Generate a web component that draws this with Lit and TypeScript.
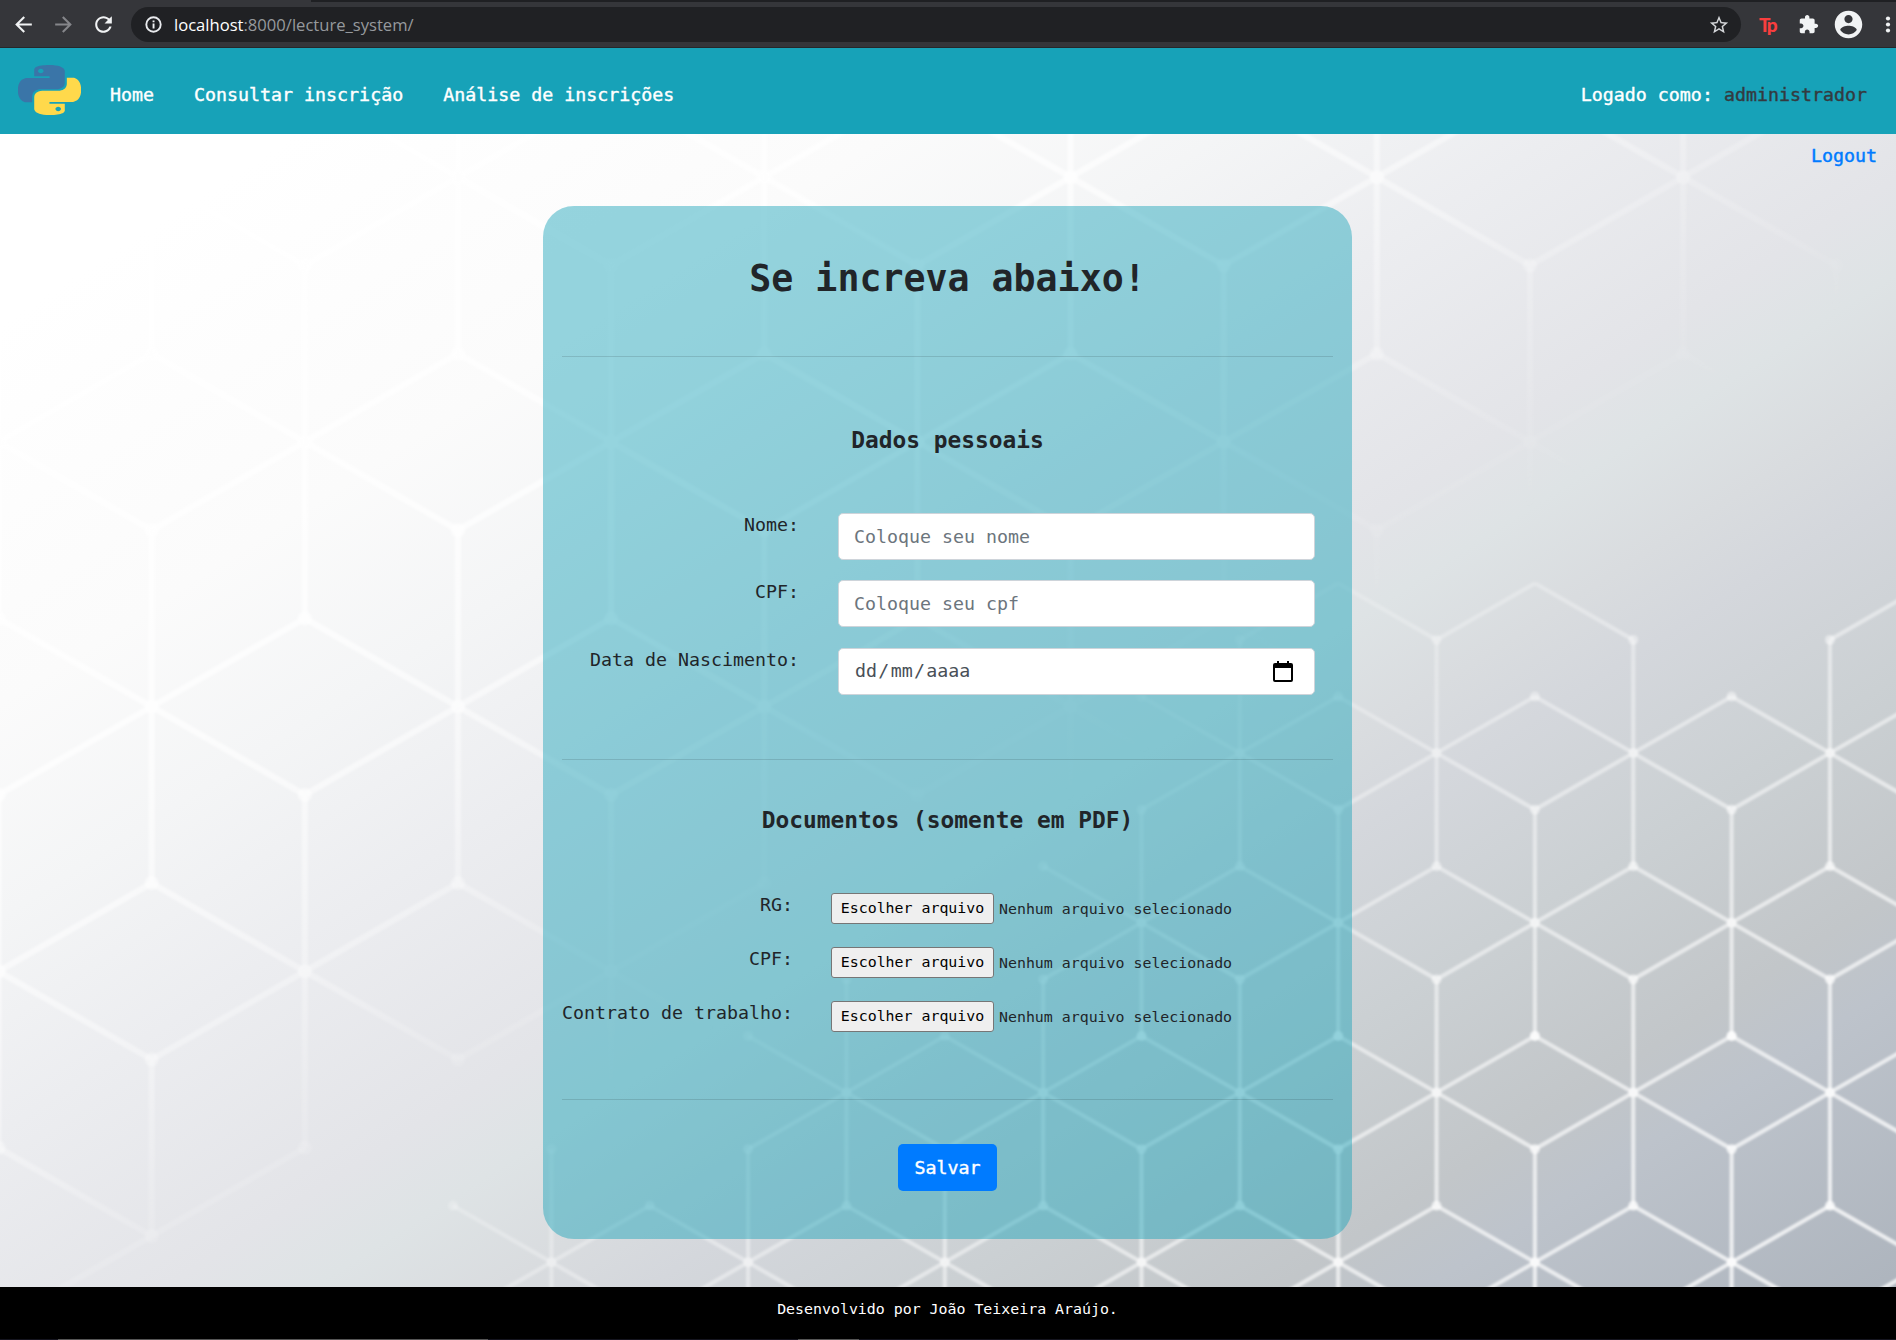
import { LitElement, html, css, svg } from "lit";
import { customElement, property } from "lit/decorators.js";

const PYTHON_HALF =
  "M14.25.18l.9.2.73.26.59.3.45.32.34.34.25.34.16.33.1.3.04.26.02.2-.01.13V8.5l-.05.63-.13.55-.21.46-.26.38-.3.31-.33.25-.35.19-.35.14-.33.1-.3.07-.26.04-.21.02H8.77l-.69.05-.59.14-.5.22-.41.27-.33.32-.27.35-.2.36-.15.37-.1.35-.07.32-.04.27-.02.21v3.06H3.17l-.21-.03-.28-.07-.32-.12-.35-.18-.36-.26-.36-.36-.35-.46-.32-.59-.28-.73-.21-.88-.14-1.05-.05-1.23.06-1.22.16-1.04.24-.87.32-.71.36-.57.4-.44.42-.33.42-.24.4-.16.36-.1.32-.05.24-.01h.16l.06.01h8.16v-.83H6.18l-.01-2.75-.02-.37.05-.34.11-.31.17-.28.25-.26.31-.23.38-.2.44-.18.51-.15.58-.12.64-.1.71-.06.77-.04.84-.02 1.27.05zm-6.3 1.98l-.23.33-.08.41.08.41.23.34.33.22.41.09.41-.09.33-.22.23-.34.08-.41-.08-.41-.23-.33-.33-.22-.41-.09-.41.09z";

/* ---------- isometric cube wallpaper ---------- */

type Spoke = "u" | "d" | "ul" | "ur" | "dl" | "dr";
interface Hub { x: number; y: number; spokes?: Spoke[] }
const ALL: Spoke[] = ["u", "d", "ul", "ur", "dl", "dr"];

function lattice(hubs: Hub[], hx: number, hy: number, nodeR: number) {
  const off: Record<Spoke, [number, number]> = {
    u: [0, -2 * hy], d: [0, 2 * hy],
    ul: [-hx, -hy], ur: [hx, -hy], dl: [-hx, hy], dr: [hx, hy],
  };
  let lines = "";
  const nodes = new Map<string, [number, number]>();
  const add = (x: number, y: number) =>
    nodes.set(Math.round(x / 8) + ":" + Math.round(y / 8), [x, y]);
  for (const h of hubs) {
    const list = h.spokes ?? ALL;
    if (list.length > 3) add(h.x, h.y);
    for (const s of list) {
      const [dx, dy] = off[s];
      lines += `M${h.x} ${h.y}l${dx} ${dy}`;
      add(h.x + dx, h.y + dy);
    }
  }
  return svg`<path d=${lines}></path>${[...nodes.values()].map(
    ([x, y]) => svg`<circle cx=${x} cy=${y} r=${nodeR} stroke="none"></circle>`
  )}`;
}

const SX = 98.35, SY = 56.6;
const small = (col: number, row: number, spokes?: Spoke[]): Hub => ({
  x: 551.4 + col * SX, y: 1262.3 - row * 169.75, spokes,
});
const smallHubs: Hub[] = [
  ...[0, 2, 4, 6, 8, 10, 12, 14].map((c) => small(c, 0)),
  ...[3, 5, 7, 9, 11, 13].map((c) => small(c, 1)),
  ...[6, 8, 10, 12, 14].map((c) => small(c, 2)),
  ...[7, 9, 11, 13].map((c) => small(c, 3)),
  small(8, 4, ["dl", "dr"]),
  small(10, 4, ["dl", "dr"]),
  small(14, 4, ["dl"]),
];

const BX = 153.15, BY = 88.2;
const big = (col: number, row: number, spokes?: Spoke[]): Hub => ({
  x: -1.5 + col * BX, y: 177.2 + row * 264.7, spokes,
});
const bigHubs: Hub[] = [
  ...[1, 3, 5, 7, 9, 11].map((c) => big(c, 0)),
  ...[0, 2, 4, 6, 8, 10, 12].map((c) => big(c, 1)),
  ...[1, 3, 5, 7, 9].map((c) => big(c, 2)),
  ...[0, 2, 4].map((c) => big(c, 3)),
  big(1, 4, ["u", "ul", "ur", "dl"]),
];

@customElement("cube-wallpaper")
class CubeWallpaper extends LitElement {
  static styles = css`
    :host { display: block; }
    .art { display: block; width: 100%; height: 100%; }
  `;
  render() {
    const g = { x1: 0, y1: 134, x2: 1078, y2: 1818 };
    return html`<svg class="art" viewBox="0 134 1896 1153" preserveAspectRatio="none">
      ${svg`<defs>
        <linearGradient id="sky" gradientUnits="userSpaceOnUse" x1=${g.x1} y1=${g.y1} x2=${g.x2} y2=${g.y2}>
          <stop offset="0.08" stop-color="#ffffff"></stop>
          <stop offset="0.24" stop-color="#fbfbfb"></stop>
          <stop offset="0.33" stop-color="#f4f5f6"></stop>
          <stop offset="0.42" stop-color="#ecedf0"></stop>
          <stop offset="0.53" stop-color="#e3e4e8"></stop>
          <stop offset="0.57" stop-color="#dee3e5"></stop>
          <stop offset="0.62" stop-color="#d9dcdf"></stop>
          <stop offset="0.66" stop-color="#d4d7dc"></stop>
          <stop offset="0.74" stop-color="#cbd0d3"></stop>
          <stop offset="0.83" stop-color="#c2c6c9"></stop>
          <stop offset="0.87" stop-color="#bdc3cb"></stop>
          <stop offset="1" stop-color="#adb4bd"></stop>
        </linearGradient>
        <linearGradient id="far" gradientUnits="userSpaceOnUse" x1=${g.x1} y1=${g.y1} x2=${g.x2} y2=${g.y2}>
          <stop offset="0.3" stop-color="#fff" stop-opacity="0.68"></stop>
          <stop offset="0.4" stop-color="#fff" stop-opacity="0.42"></stop>
          <stop offset="0.48" stop-color="#fff" stop-opacity="0.18"></stop>
          <stop offset="0.57" stop-color="#fff" stop-opacity="0"></stop>
        </linearGradient>
        <linearGradient id="near" gradientUnits="userSpaceOnUse" x1=${g.x1} y1=${g.y1} x2=${g.x2} y2=${g.y2}>
          <stop offset="0.54" stop-color="#fff" stop-opacity="0.15"></stop>
          <stop offset="0.66" stop-color="#fff" stop-opacity="0.38"></stop>
          <stop offset="0.82" stop-color="#fff" stop-opacity="0.62"></stop>
          <stop offset="0.96" stop-color="#fff" stop-opacity="0.76"></stop>
        </linearGradient>
        <filter id="soft" filterUnits="userSpaceOnUse" x="0" y="134" width="1896" height="1153"><feGaussianBlur stdDeviation="0.9"></feGaussianBlur></filter>
        <filter id="softer" filterUnits="userSpaceOnUse" x="0" y="134" width="1896" height="1153"><feGaussianBlur stdDeviation="1.3"></feGaussianBlur></filter>
      </defs>
      <rect x="0" y="134" width="1896" height="1153" fill="url(#sky)"></rect>
      <g filter="url(#softer)" stroke="url(#far)" fill="url(#far)" stroke-width="6">${lattice(bigHubs, BX, BY, 7)}</g>
      <g filter="url(#soft)" stroke="url(#near)" fill="url(#near)" stroke-width="4.2">${lattice(smallHubs, SX, SY, 5)}</g>`}
    </svg>`;
  }
}

/* ---------- browser toolbar ---------- */

@customElement("browser-bar")
class BrowserBar extends LitElement {
  static styles = css`
    :host { display: block; font-family: "Open Sans", "Noto Sans", sans-serif; }
    .strip { height: 2px; background: linear-gradient(90deg, #35363a 311px, #1f2023 311px); }
    .bar { box-sizing: border-box; height: 46px; background: #35363a; border-bottom: 1px solid #26272a;
      display: flex; align-items: center; padding-left: 11px; overflow: hidden; }
    .ic { display: block; flex: none; fill: #f1f3f4; }
    .dim { fill: #85868a; }
    .nav { display: flex; gap: 15px; width: 120px; flex: none; }
    .omni { height: 35px; width: 1610px; box-sizing: border-box; flex: none; border-radius: 18px; background: #202124;
      display: flex; align-items: center; padding: 0 11px 0 13px; }
    .url { flex: 1; margin-left: 11px; font-size: 16.6px; line-height: 22px; color: #96999d; }
    .host { color: #fff; }
    .tp { width: 20px; margin-left: 18px; color: #f93e3e; font: 900 19px/24px Lato, sans-serif; letter-spacing: -2px; flex: none; }
    .ext { margin-left: 19px; }
    .user { margin-left: 13px; }
    .more { margin-left: 14px; }
  `;
  render() {
    return html`<div class="strip"></div>
      <div class="bar">
        <div class="nav">
          <svg class="ic" width="25" height="25" viewBox="0 0 24 24"><path d="M20 11H7.83l5.59-5.59L12 4l-8 8 8 8 1.41-1.41L7.83 13H20v-2z"/></svg>
          <svg class="ic dim" width="25" height="25" viewBox="0 0 24 24"><path d="M12 4l-1.41 1.41L16.17 11H4v2h12.17l-5.58 5.59L12 20l8-8z"/></svg>
          <svg class="ic" width="25" height="25" viewBox="0 0 24 24"><path d="M17.65 6.35C16.2 4.9 14.21 4 12 4c-4.42 0-7.99 3.58-7.99 8s3.57 8 7.99 8c3.73 0 6.84-2.55 7.73-6h-2.08c-.82 2.33-3.04 4-5.65 4-3.31 0-6-2.69-6-6s2.69-6 6-6c1.66 0 3.14.69 4.22 1.78L13 11h7V4l-2.35 2.35z"/></svg>
        </div>
        <div class="omni">
          <svg class="ic" width="19" height="19" viewBox="0 0 19 19"><circle cx="9.5" cy="9.5" r="7.2" fill="none" stroke="#e8eaed" stroke-width="1.9"/><path d="M8.6 8.5h1.9v5H8.6zM8.6 5.4h1.9v1.9H8.6z"/></svg>
          <div class="url"><span class="host">localhost</span>:8000/lecture_system/</div>
          <svg class="ic" width="22" height="22" viewBox="0 0 24 24"><path fill="#d5d7da" d="M22 9.24l-7.19-.62L12 2 9.19 8.63 2 9.24l5.46 4.73L5.82 21 12 17.27 18.18 21l-1.63-7.03L22 9.24zM12 15.4l-3.76 2.27 1-4.28-3.32-2.88 4.38-.38L12 6.1l1.71 4.04 4.38.38-3.32 2.88 1 4.28L12 15.4z"/></svg>
        </div>
        <div class="tp">Tp</div>
        <svg class="ic ext" width="21" height="21" viewBox="0 0 24 24"><path d="M20.5 11H19V7c0-1.1-.9-2-2-2h-4V3.5C13 2.12 11.88 1 10.5 1S8 2.12 8 3.5V5H4c-1.1 0-1.99.9-1.99 2v3.8H3.5c1.49 0 2.7 1.21 2.7 2.7s-1.21 2.7-2.7 2.7H2V20c0 1.1.9 2 2 2h3.8v-1.5c0-1.49 1.21-2.7 2.7-2.7 1.49 0 2.7 1.21 2.7 2.7V22H17c1.1 0 2-.9 2-2v-4h1.5c1.38 0 2.5-1.12 2.5-2.5S21.88 11 20.5 11z"/></svg>
        <svg class="ic user" width="33" height="33" viewBox="0 0 24 24"><path d="M12 2C6.48 2 2 6.48 2 12s4.48 10 10 10 10-4.48 10-10S17.52 2 12 2zm0 3c1.66 0 3 1.34 3 3s-1.34 3-3 3-3-1.34-3-3 1.34-3 3-3zm0 14.2c-2.5 0-4.71-1.28-6-3.22.03-1.99 4-3.08 6-3.08 1.99 0 5.97 1.09 6 3.08-1.29 1.94-3.5 3.22-6 3.22z"/></svg>
        <svg class="ic more" width="25" height="25" viewBox="0 0 25 25"><circle cx="9" cy="6.5" r="2.1"/><circle cx="9" cy="12.5" r="2.1"/><circle cx="9" cy="18.5" r="2.1"/></svg>
      </div>`;
  }
}

/* ---------- file picker ---------- */

@customElement("file-row")
class FileRow extends LitElement {
  @property() label = "";
  static styles = css`
    :host { display: flex; height: 31px; }
    .label { width: 231px; text-align: right; font-size: 18.3px; line-height: 24px; white-space: nowrap; }
    .btn { margin: 0 0 0 38px; width: 163px; height: 31px; box-sizing: border-box; padding: 0; border: 1px solid #767676;
      border-radius: 3px; background: #efefef; color: #000; font: 14.9px/27px "DejaVu Sans Mono", monospace; }
    .none { margin-left: 5px; font-size: 14.9px; line-height: 32px; white-space: nowrap; }
  `;
  render() {
    return html`<div class="label">${this.label}</div>
      <button class="btn">Escolher arquivo</button>
      <div class="none">Nenhum arquivo selecionado</div>`;
  }
}

@customElement("app-root")
class AppRoot extends LitElement {
  static styles = css`
    :host { display: block; width: 1896px; height: 1340px; overflow: hidden; color: #212529;
      font-family: "DejaVu Sans Mono", "Liberation Mono", monospace; font-size: 18.3px; line-height: 30px; }
    .navbar { height: 86px; box-sizing: border-box; background: #17a2b8; display: flex; padding: 17px 29px 0 18px;
      color: #fff; -webkit-text-stroke: 0.4px; }
    .logo { width: 63px; height: 50px; display: block; }
    .links { display: flex; gap: 40px; margin: 15px auto 0 29px; }
    .who { margin-top: 15px; }
    .admin { color: #343a40; }
    .main { position: relative; height: 1153px; }
    .bg { position: absolute; inset: 0; }
    .content { position: relative; height: 1153px; display: flex; flex-direction: column; align-items: center; }
    .logout { align-self: flex-end; height: 72px; box-sizing: border-box; padding: 7px 19px 0 0; color: #007bff; -webkit-text-stroke: 0.45px; }
    .card { width: 809px; height: 1033px; margin-right: 1px; box-sizing: border-box; padding: 0 19px; border-radius: 31px;
      background: rgba(23, 162, 184, 0.45); display: flex; flex-direction: column; }
    .title { margin: 49px 0 0; font-size: 36.6px; line-height: 48px; font-weight: 700; text-align: center; }
    .rule { height: 1px; flex: none; background: rgba(0, 0, 0, 0.12); }
    .r1 { margin-top: 53px; }
    .sub { margin: 0; text-align: center; font-size: 22.85px; line-height: 30px; font-weight: 700; }
    .s1 { margin-top: 68px; }
    .fields { display: flex; flex-direction: column; gap: 20px; margin-top: 58px; }
    .row { display: flex; height: 47px; }
    .born { margin-top: 1px; }
    .lab { width: 237px; text-align: right; line-height: 24px; white-space: nowrap; }
    .input { margin-left: 39px; width: 477px; height: 47px; box-sizing: border-box; border: 1px solid #ced4da; border-radius: 5px;
      background: #fff; padding: 0 15px; font: inherit; color: #495057; display: flex; align-items: center; }
    .input::placeholder { color: #6c757d; opacity: 1; }
    .date { padding: 0 20px 0 16px; justify-content: space-between; }
    .seg { display: flex; gap: 1.3px; margin-bottom: 2px; }
    .r2 { margin-top: 64px; }
    .s2 { margin-top: 45px; }
    .files { display: flex; flex-direction: column; gap: 23px; margin-top: 58px; }
    .r3 { margin-top: 67px; }
    .save { align-self: center; margin: 44px 0 0; width: 99px; height: 47px; border: 0; border-radius: 5px; background: #007bff;
      color: #fff; font: inherit; padding: 0; -webkit-text-stroke: 0.4px; }
    .footer { height: 52px; box-sizing: border-box; background: #000; color: #fff; text-align: center;
      font-size: 14.9px; line-height: 24px; padding: 10px 1px 0 0; }
    .edge { height: 1px; background: linear-gradient(90deg, #15151f 58px, #555 58px 488px, #15151f 488px 798px, #555 798px 859px, #15151f 859px); }
  `;
  render() {
    return html`
      <browser-bar></browser-bar>
      <div class="navbar">
        <svg class="logo" viewBox="0 0 24 24" preserveAspectRatio="none">
          <path fill="#3a75a8" d=${PYTHON_HALF} />
          <path fill="#ffd94b" transform="rotate(180 12 12)" d=${PYTHON_HALF} />
        </svg>
        <div class="links"><span>Home</span><span>Consultar inscrição</span><span>Análise de inscrições</span></div>
        <div class="who">Logado como: <span class="admin">administrador</span></div>
      </div>
      <div class="main">
        <cube-wallpaper class="bg"></cube-wallpaper>
        <div class="content">
          <div class="logout">Logout</div>
          <div class="card">
            <h1 class="title">Se increva abaixo!</h1>
            <div class="rule r1"></div>
            <h2 class="sub s1">Dados pessoais</h2>
            <div class="fields">
              <div class="row"><div class="lab">Nome:</div><input class="input" placeholder="Coloque seu nome" /></div>
              <div class="row"><div class="lab">CPF:</div><input class="input" placeholder="Coloque seu cpf" /></div>
              <div class="row born"><div class="lab">Data de Nascimento:</div>
                <div class="input date">
                  <div class="seg"><span>dd</span><span>/</span><span>mm</span><span>/</span><span>aaaa</span></div>
                  <svg width="22" height="22" viewBox="0 0 22 22"><path fill="#000" fill-rule="evenodd" d="M3 2h2V0h2v2h8V0h2v2h2q2 0 2 2v15q0 2-2 2H3q-2 0-2-2V4q0-2 2-2zM3 7v12h16V7z" /></svg>
                </div></div>
            </div>
            <div class="rule r2"></div>
            <h2 class="sub s2">Documentos (somente em PDF)</h2>
            <div class="files">
              <file-row label="RG:"></file-row>
              <file-row label="CPF:"></file-row>
              <file-row label="Contrato de trabalho:"></file-row>
            </div>
            <div class="rule r3"></div>
            <button class="save">Salvar</button>
          </div>
        </div>
      </div>
      <div class="footer">Desenvolvido por João Teixeira Araújo.</div>
      <div class="edge"></div>
    `;
  }
}
